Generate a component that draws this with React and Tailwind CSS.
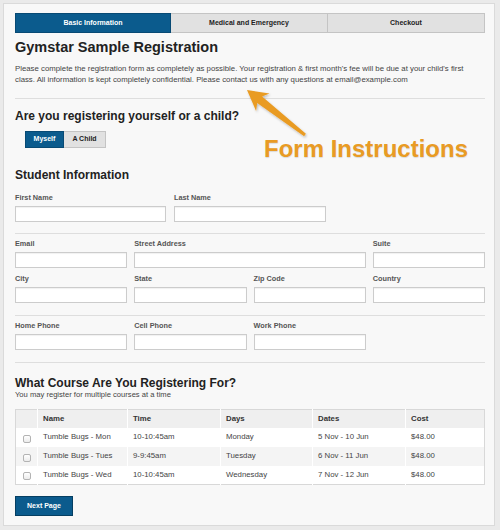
import React from "react";

const font = { fontFamily: '"Liberation Sans", Arial, sans-serif' };

function Field({ label, className = "" }) {
  return (
    <div className={className}>
      <div className="text-[7.3px] leading-[10px] font-bold text-[#555]">{label}</div>
      <div className="mt-[3px] h-[16px] bg-white border border-[#cccccc] shadow-[inset_0_1px_1px_rgba(0,0,0,0.06)]" />
    </div>
  );
}

const courses = [
  { name: "Tumble Bugs - Mon", time: "10-10:45am", day: "Monday", dates: "5 Nov - 10 Jun", cost: "$48.00" },
  { name: "Tumble Bugs - Tues", time: "9-9:45am", day: "Tuesday", dates: "6 Nov - 11 Jun", cost: "$48.00" },
  { name: "Tumble Bugs - Wed", time: "10-10:45am", day: "Wednesday", dates: "7 Nov - 12 Jun", cost: "$48.00" },
];

export default function App() {
  return (
    <div className="w-[500px] h-[530px] bg-[#eaeaea] pl-[3px] pt-[3px] overflow-hidden" style={font}>
      <div className="relative w-[492px] h-[523px] bg-[#f8f8f8] border border-[#dadada] pl-[11px] pr-[9px] pt-[9px]">
        {/* Tabs */}
        <div className="flex h-[20px] text-[7px] font-bold">
          <div className="w-[156px] flex items-center justify-center bg-[#0b5b8d] border border-[#084a74] text-white">
            Basic Information
          </div>
          <div className="w-[157px] flex items-center justify-center bg-[#e1e1e1] border border-[#c4c4c4] border-l-0 text-[#222]">
            Medical and Emergency
          </div>
          <div className="flex-1 flex items-center justify-center bg-[#e1e1e1] border border-[#c4c4c4] border-l-0 text-[#222]">
            Checkout
          </div>
        </div>

        <h1 className="mt-[5px] text-[14.5px] leading-[18px] font-bold text-[#222]">
          Gymstar Sample Registration
        </h1>
        <p className="mt-[7px] text-[7.8px] leading-[11px] text-[#444] pr-[4px]">
          Please complete the registration form as completely as possible. Your registration &amp; first month's fee will be due at your child's first class. All information is kept completely confidential. Please contact us with any questions at email@example.com
        </p>

        <div className="mt-[13px] border-t border-[#dedede]" />

        <h2 className="mt-[10px] text-[12px] leading-[15px] font-bold text-[#222]">
          Are you registering yourself or a child?
        </h2>
        <div className="mt-[7px] ml-[10px] flex h-[17px] text-[7px] font-bold">
          <div className="w-[39px] flex items-center justify-center bg-[#0b5b8d] border border-[#084a74] text-white">
            Myself
          </div>
          <div className="w-[42px] flex items-center justify-center bg-[#e1e1e1] border border-[#c4c4c4] border-l-0 text-[#222]">
            A Child
          </div>
        </div>

        <h2 className="mt-[20px] text-[12px] leading-[15px] font-bold text-[#222]">
          Student Information
        </h2>
        <div className="mt-[10px] flex gap-[8px]">
          <Field label="First Name" className="w-[151px]" />
          <Field label="Last Name" className="w-[152px]" />
        </div>

        <div className="mt-[11px] border-t border-[#dedede]" />

        <div className="mt-[5px] grid grid-cols-4 gap-x-[7px] gap-y-[6px]">
          <Field label="Email" />
          <Field label="Street Address" className="col-span-2" />
          <Field label="Suite" />
          <Field label="City" />
          <Field label="State" />
          <Field label="Zip Code" />
          <Field label="Country" />
        </div>

        <div className="mt-[12px] border-t border-[#dedede]" />

        <div className="mt-[5px] grid grid-cols-4 gap-x-[7px]">
          <Field label="Home Phone" />
          <Field label="Cell Phone" />
          <Field label="Work Phone" />
        </div>

        <div className="mt-[12px] border-t border-[#dedede]" />

        <h2 className="mt-[14px] text-[12px] leading-[13px] font-bold text-[#222]">
          What Course Are You Registering For?
        </h2>
        <div className="text-[7.6px] leading-[9px] text-[#444]">You may register for multiple courses at a time</div>

        <table className="mt-[10px] w-full table-fixed border-collapse border border-[#d8d8d8] text-[7.8px] text-[#444]">
          <colgroup>
            <col className="w-[22px]" />
            <col className="w-[90px]" />
            <col className="w-[93px]" />
            <col className="w-[92px]" />
            <col className="w-[93px]" />
            <col />
          </colgroup>
          <thead>
            <tr className="h-[18px] bg-[#efefef] font-bold text-[#333]">
              <th className="border-r border-white" />
              <th className="text-left pl-[5px] border-r border-white">Name</th>
              <th className="text-left pl-[5px] border-r border-white">Time</th>
              <th className="text-left pl-[5px] border-r border-white">Days</th>
              <th className="text-left pl-[5px] border-r border-white">Dates</th>
              <th className="text-left pl-[5px]">Cost</th>
            </tr>
          </thead>
          <tbody>
            {courses.map((c, i) => (
              <tr key={c.name} className={`h-[19px] ${i === 1 ? "bg-[#f4f4f4]" : "bg-white"}`}>
                <td className="border-r border-white">
                  <div className="ml-[7px] mt-[3px] w-[8px] h-[8px] rounded-[2px] border border-[#b3b3b3] bg-gradient-to-b from-white to-[#ececec]" />
                </td>
                <td className="pl-[5px] border-r border-white">{c.name}</td>
                <td className="pl-[5px] border-r border-white">{c.time}</td>
                <td className="pl-[5px] border-r border-white">{c.day}</td>
                <td className="pl-[5px] border-r border-white">{c.dates}</td>
                <td className="pl-[5px]">{c.cost}</td>
              </tr>
            ))}
          </tbody>
        </table>

        <button className="mt-[11px] w-[58px] h-[20px] bg-[#0b5b8d] border border-[#063f62] text-white text-[7px] font-bold">
          Next Page
        </button>

        {/* Annotation overlay */}
        <svg className="absolute left-[-4px] top-[-4px] pointer-events-none" width="500" height="200" viewBox="0 0 500 200">
          <defs>
            <filter id="sh" x="-20%" y="-20%" width="140%" height="140%">
              <feDropShadow dx="1" dy="1.5" stdDeviation="1.2" floodColor="#000" floodOpacity="0.25" />
            </filter>
          </defs>
          <polygon
            points="247,90 269.5,93.6 262.1,96.6 305.9,133.8 304.1,136.2 257.2,103 256.1,111"
            fill="#e99b24"
            filter="url(#sh)"
          />
        </svg>
        <div className="absolute left-[260px] top-[131px] text-[24px] leading-[28px] font-bold text-[#e99b24] [text-shadow:0_1px_1px_rgba(0,0,0,0.12)]">
          Form Instructions
        </div>
      </div>
    </div>
  );
}
